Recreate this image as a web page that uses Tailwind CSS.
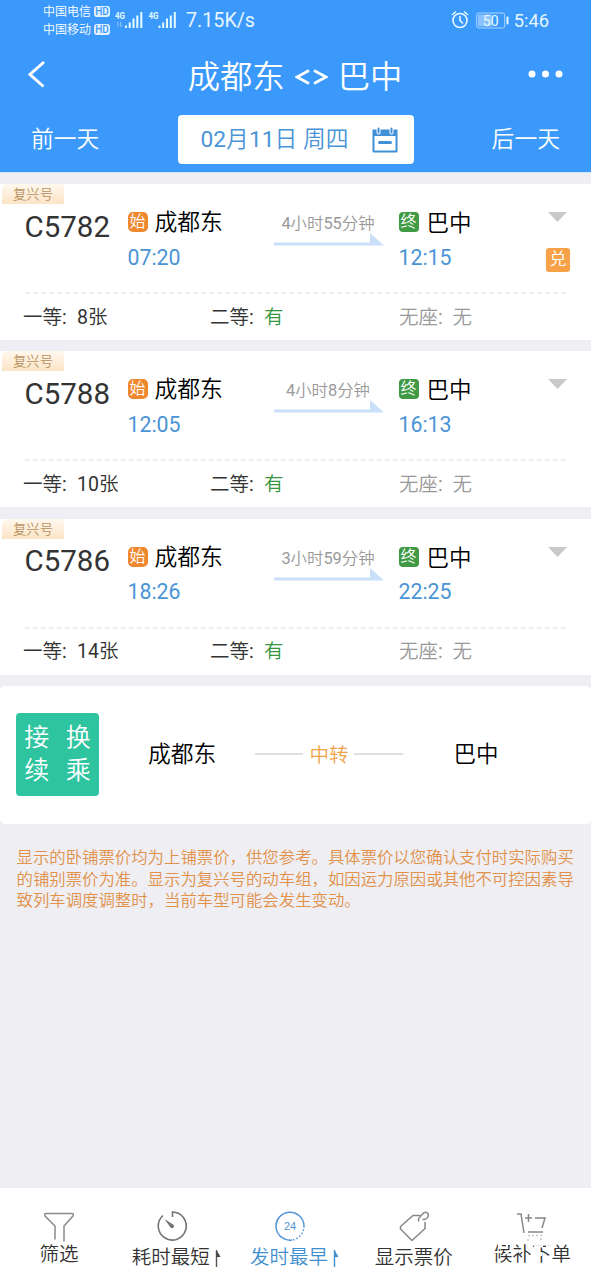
<!DOCTYPE html>
<html lang="zh-CN">
<head>
<meta charset="utf-8">
<title>成都东 - 巴中</title>
<script src="https://cdn.jsdelivr.net/npm/@tailwindcss/browser@4"></script>
</head>
<body class="w-[591px] h-[1280px] overflow-hidden bg-[#eeeef3] font-[Roboto,'Noto_Sans_CJK_SC_DemiLight','Noto_Sans_CJK_SC',sans-serif] text-[#333] flex flex-col whitespace-nowrap">
<header class="h-[173px] shrink-0 bg-[#3b99fc] border-b border-[#cfe6fc] text-white flex flex-col">
  <div class="h-[40px] flex items-center pl-[43px] pr-[42px]">
    <div class="flex flex-col w-[67px] text-[12px] leading-[18px] pt-[2px]">
      <div class="flex items-center justify-between"><span>中国电信</span><span class="w-[16px] h-[11px] -mt-[2px] rounded-[3px] bg-[#e0f0ff] text-[#3b99fc] text-[10px] leading-[11px] font-medium text-center">HD</span></div>
      <div class="flex items-center justify-between"><span>中国移动</span><span class="w-[16px] h-[11px] -mt-[1px] rounded-[3px] bg-[#e0f0ff] text-[#3b99fc] text-[10px] leading-[11px] font-medium text-center">HD</span></div>
    </div>
    <svg class="ml-[4px] w-[64px] h-[20px]" viewBox="114 10 64 20" fill="#e6fbff">
      <g font-family="Roboto" font-size="9" font-weight="700"><text x="115" y="18.500" textLength="10" lengthAdjust="spacingAndGlyphs">4G</text><text x="148.500" y="18.500" textLength="10" lengthAdjust="spacingAndGlyphs">4G</text></g>
      <path opacity=".5" d="M117 22l1.500 0v5h-1v-4zM120 22h1v3h1.500l-2 2.500z"/>
      <path d="M125 25.500h2v2.500h-2zM128.700 22.500h2v5.500h-2zM132.500 18.500h2v9.500h-2zM136.300 15.500h2v12.500h-2zM140.300 12h2v16h-2zM158.500 25.500h2v2.500h-2zM162.200 22.500h2v5.500h-2zM166 18.500h2v9.500h-2zM169.800 15.500h2v12.500h-2zM173.800 12h2v16h-2z"/>
    </svg>
    <span class="ml-[8px] mt-[1px] text-[19.700px] leading-[20px] text-[#e6f6ff]">7.15K/s</span>
    <span class="flex-1"></span>
    <svg class="w-[18px] h-[18px]" viewBox="0 0 18 18" fill="none" stroke="#e6fbff" stroke-width="1.600" stroke-linecap="round"><circle cx="9" cy="9.500" r="7"/><path d="M9 5.500v4l2.500 2.500M1.500 3.500l3-2.500M16.500 3.500l-3-2.500"/></svg>
    <svg class="ml-[7px] w-[33px] h-[17px]" viewBox="0 0 33 17"><rect x=".7" y="1" width="28" height="15" rx="2" fill="none" stroke="#a9d4fe"/><rect x="2" y="2.500" width="14" height="12" fill="#8bc2fd"/><rect x="30.500" y="4.500" width="2" height="8" rx="1" fill="#e6fbff"/><text x="14.700" y="13.500" text-anchor="middle" font-family="Roboto" font-size="14" fill="#e6fbff">50</text></svg>
    <span class="ml-[5px] mt-[1px] text-[18.300px] leading-[20px] text-[#e6f6ff]">5:46</span>
  </div>
  <div class="h-[70px] flex items-center justify-between pl-[27px] pr-[28px]">
    <svg class="w-[19px] h-[28px] -mt-[2px]" viewBox="0 0 19 28" fill="none" stroke="#fff" stroke-width="3"><path d="M17 2L3 14.500L16.500 26.500"/></svg>
    <h1 class="flex items-center text-[32.300px] leading-[40px] pl-[16px] pt-[3px]"><span>成都东</span><svg class="mx-[10px] w-[33px] h-[16px]" viewBox="0 0 33 16" fill="none" stroke="#fff" stroke-width="2.600"><path d="M14 1.500L2 8L14 14.500M19 1.500L31 8L19 14.500"/></svg><span>巴中</span></h1>
    <svg class="w-[35px] h-[8px] -mt-[2px]" viewBox="0 0 35 8" fill="#fff"><circle cx="4" cy="4" r="3.500"/><circle cx="17.500" cy="4" r="3.500"/><circle cx="31" cy="4" r="3.500"/></svg>
  </div>
  <div class="h-[58px] flex items-center justify-between px-[31px] text-[22.800px] leading-[30px]">
    <span class="w-[146px] pt-[2px]">前一天</span>
    <div class="w-[236px] h-[49px] mt-[1px] bg-white rounded-[4px] flex items-center pl-[23px] pr-[16px] justify-between text-[#4a94d6]">
      <span class="pt-[1px]">02月11日 周四</span>
      <svg class="w-[26px] h-[26px]" viewBox="0 0 26 26"><path fill="#4190d8" fill-rule="evenodd" d="M.5 2.500h4v3a2 2 0 0 0 4 0v-3h9v3a2 2 0 0 0 4 0v-3h4V24a1.500 1.500 0 0 1-1.500 1.500H2A1.500 1.500 0 0 1 .5 24zM2.500 9v14.500h21V9z"/><path d="M6.500 1.500v4M19.500 1.500v4" stroke="#4190d8" stroke-width="2" stroke-linecap="round"/><path d="M7.500 15.500h11" stroke="#4190d8" stroke-width="3" stroke-linecap="round"/></svg>
    </div>
    <span class="w-[146px] text-right pt-[2px]">后一天</span>
  </div>
</header>

<main class="flex-1 flex flex-col pt-[11px]">
  <div id="trains" class="flex flex-col gap-[11.400px]"></div>
  <template id="train">
    <article class="h-[156px] bg-white flex flex-col">
      <div class="ml-[2px] w-[62px] h-[20px] rounded-tl-[5px] bg-linear-to-b from-[#fff8ef] to-[#fce4c6] text-[13.300px] leading-[21px] font-medium text-[#b8925e] text-center">复兴号</div>
      <div class="h-[88px] pl-[24.500px] pr-[21px] flex">
        <div data-k="no" class="w-[103px] text-[29.500px] leading-[36px] pt-[4.500px]"></div>
        <div class="w-[146px] pt-[4px]">
          <div class="flex items-center gap-[7px] h-[30px]"><span class="w-[20px] h-[20px] -mt-[2px] rounded-[5px] bg-[#f0882f] text-white text-[16px] leading-[19px] text-center">始</span><span class="text-[22.800px] text-black leading-[30px]">成都东</span></div>
          <div data-k="dep" class="text-[21.300px] leading-[28px] mt-[5.500px] text-[#4a94d6]"></div>
        </div>
        <div class="w-[125px] pt-[10px]">
          <div data-k="dur" class="w-[109px] text-center text-[16.400px] leading-[20px] text-[#999]"></div>
          <svg class="w-[110px] h-[14px] -mt-[2px]" viewBox="0 0 110 14" fill="#c9e0f8"><path d="M0 10.500H96V1L110 13.500H0z"/></svg>
        </div>
        <div class="flex-1 pt-[4px]">
          <div class="flex items-center gap-[8px] h-[30px]"><span class="w-[20px] h-[20px] -mt-[2px] rounded-[4px] bg-[#409a43] text-white text-[16px] leading-[19px] text-center">终</span><span class="text-[22.500px] text-black leading-[30px]">巴中</span></div>
          <div data-k="arr" class="text-[21.300px] leading-[28px] mt-[5.500px] text-[#4a94d6]"></div>
        </div>
        <div class="w-[24px] pt-[8px] flex flex-col items-center">
          <svg class="w-[19px] h-[10px] -ml-[2px]" viewBox="0 0 19 10" fill="#c9c9c9"><path d="M0 0h19L9.500 10z"/></svg>
          <span data-k="tag" class="mt-[25.500px] w-[24px] h-[24px] rounded-[3px] bg-[#f7a148] text-white text-[17px] leading-[22px] text-center">兑</span>
        </div>
      </div>
      <svg class="ml-[25px] w-[541px] h-[2px]" viewBox="0 0 541 2"><path d="M0 1H541" stroke="#e9e9e9" stroke-width="1.500" stroke-dasharray="5 3"/></svg>
      <div class="flex pl-[23px] pt-[9.500px] text-[19.500px] leading-[28px]">
        <div class="w-[187px] flex"><span class="w-[54px]">一等:</span><span data-k="first"></span></div>
        <div class="w-[189px] flex"><span class="w-[54px]">二等:</span><span class="text-[#35963c]">有</span></div>
        <div class="flex text-[#999]"><span class="w-[53.500px]">无座:</span><span>无</span></div>
      </div>
    </article>
  </template>

  <section class="mt-[11px] h-[138px] bg-white rounded-[5px] flex items-center pl-[16px]">
    <div class="w-[83px] h-[83px] rounded-[4px] bg-[#2ec4a0] text-white text-[25px] leading-[33px] grid grid-cols-2 content-start justify-items-center pt-[8px]"><span>接</span><span>换</span><span>续</span><span>乘</span></div>
    <span class="ml-[49px] text-[22.800px] text-black">成都东</span>
    <span class="ml-[39px] w-[48px] h-[2px] -mt-[2px] bg-[#e0e0e0]"></span>
    <span class="mx-[6px] mt-[1px] text-[19.500px] text-[#f0a34a]">中转</span>
    <span class="w-[49px] h-[2px] -mt-[2px] bg-[#e0e0e0]"></span>
    <span class="ml-[50px] text-[22.500px] text-black">巴中</span>
  </section>

  <p class="mt-[22.500px] pl-[16.500px] text-[16.400px] leading-[21.500px] text-[#e2914a] font-['Noto_Sans_CJK_SC_DemiLight','Noto_Sans_CJK_SC',sans-serif]">显示的卧铺票价均为上铺票价，供您参考。具体票价以您确认支付时实际购买<br>的铺别票价为准。显示为复兴号的动车组，如因运力原因或其他不可控因素导<br>致列车调度调整时，当前车型可能会发生变动。</p>
</main>

<footer class="relative h-[92px] shrink-0 bg-white grid grid-cols-5 text-[19.500px] leading-[26px]">
  <div class="flex flex-col items-center pt-[24px]">
    <svg class="w-[30px] h-[30px]" viewBox="0 0 30 30" fill="none" stroke="#8a8a8e" stroke-width="1.500"><path d="M11 27.500V14L1 4Q0 1.500 2 1.500H28Q30 1.500 29 4L20 14V29.500"/></svg>
    <span>筛选</span>
  </div>
  <div class="flex flex-col items-center pt-[23px]">
    <svg class="w-[30px] h-[30px] -ml-[10px]" viewBox="0 0 30 30" fill="none" stroke="#707378" stroke-width="1.600"><path d="M15.500 6V1A14 14 0 1 1 6 4.500"/><path fill="#707378" stroke="none" d="M7.500 8L16.500 13.700A2 2 0 1 1 13.500 16.500z"/></svg>
    <span class="flex items-center mt-[4px]">耗时最短<svg class="w-[8px] h-[18px] ml-[5px] -mt-[1px]" viewBox="0 0 8 18"><path d="M1.500 1V18" stroke="#555" stroke-width="1.400"/><path fill="#444" d="M1.500 1L5.500 8H1.500z"/></svg></span>
  </div>
  <div class="flex flex-col items-center pt-[23px] text-[#3f8fcf]">
    <svg class="w-[30px] h-[30px] -ml-[10px]" viewBox="0 0 30 30" fill="none" stroke="#5295d6" stroke-width="1.500"><path d="M17 29A14 14 0 1 1 29 15"/><path d="M29 15A14 14 0 0 1 17 29" stroke-dasharray="1.500 2"/><text x="15" y="19" text-anchor="middle" font-family="Liberation Sans" font-size="11" fill="#5295d6" stroke="none">24</text></svg>
    <span class="flex items-center mt-[4px]">发时最早<svg class="w-[8px] h-[18px] ml-[5px] -mt-[1px]" viewBox="0 0 8 18"><path d="M1.500 1V18" stroke="#3f8fcf" stroke-width="1.400"/><path fill="#3f8fcf" d="M1.500 1L5.500 8H1.500z"/></svg></span>
  </div>
  <div class="flex flex-col items-center pt-[23px]">
    <svg class="w-[30px] h-[30px]" viewBox="0 0 30 30" fill="none" stroke="#85888c" stroke-width="1.500"><path d="M21.500 4.500H14L1.500 15.500V18L13 29.500L26 17.500V11"/><path d="M20 10.500Q18.500 8 21 6L24.500 2Q27 .2 29 2.500Q30 5 28 7L26 8.500H23.500"/></svg>
    <span class="mt-[4px]">显示票价</span>
  </div>
  <div class="flex flex-col items-center pt-[23px]">
    <svg class="w-[30px] h-[30px]" viewBox="0 0 30 30" fill="none" stroke="#85888c" stroke-width="1.500"><path d="M0 3H4L7 22M8 7H15M11.500 3V11M18 7H28L25 17M11 21H26"/><path d="M11 24.500H25M10 29H12M23 28H25" stroke="#c8c8ca" stroke-dasharray="2 2"/></svg>
    <span class="mt-[1px]">候补下单</span>
  </div>
  <!-- white watermark strokes laid over the last label -->
  <svg class="absolute left-[440px] top-[42px] w-[151px] h-[50px]" viewBox="440 1230 151 50" fill="none" stroke="#fff" stroke-width="2"><path d="M492 1252H502M499 1243V1249M505 1254L512 1249M507 1245V1249M515 1253L521 1250M527 1258L533 1254M534 1246.500H543M546 1246.500H552M541 1252V1256M451 1258H458"/></svg>
</footer>
<script>
const trains = [
  {no:'C5782', dep:'07:20', dur:'4小时55分钟', arr:'12:15', first:'8张', tag:true},
  {no:'C5788', dep:'12:05', dur:'4小时8分钟', arr:'16:13', first:'10张'},
  {no:'C5786', dep:'18:26', dur:'3小时59分钟', arr:'22:25', first:'14张'}
];
const tpl = document.getElementById('train');
for (const t of trains) {
  const n = tpl.content.cloneNode(true);
  for (const k of ['no','dep','dur','arr','first']) n.querySelector('[data-k="'+k+'"]').textContent = t[k];
  if (!t.tag) n.querySelector('[data-k="tag"]').remove();
  document.getElementById('trains').append(n);
}
</script>
</body>
</html>
